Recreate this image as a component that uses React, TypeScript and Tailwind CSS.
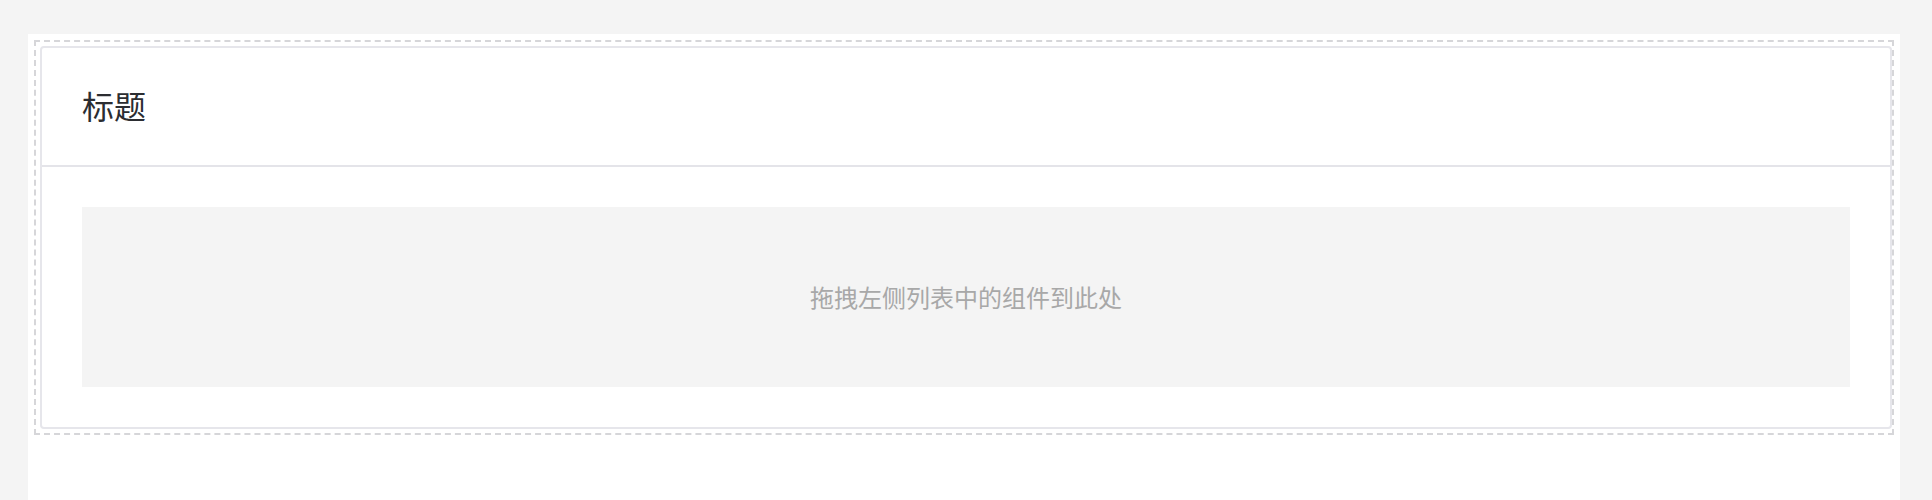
export default function App() {
  return (
    <div
      className="min-h-[500px] bg-[#f4f4f4] pt-[34px] pl-[28px] pr-[32px]"
      style={{ fontFamily: '"Noto Sans CJK SC", "Noto Sans", sans-serif' }}
    >
      <div className="min-h-[466px] bg-white p-[6px]">
        <div className="border-2 border-dashed border-[#d6d6d9] py-[4px] pl-[4px] pr-0">
          <div className="rounded-[4px] border-2 border-[#e6e6eb] bg-white">
            <div className="flex h-[119px] items-center border-b-2 border-[#e4e4e9] px-[40px] pb-[3px]">
              <span className="text-[32px] leading-none text-[#2b2d31]">标题</span>
            </div>
            <div className="p-[40px]">
              <div className="flex h-[180px] items-center justify-center bg-[#f4f4f4]">
                <span className="text-[24px] text-[#a8a8a8]">拖拽左侧列表中的组件到此处</span>
              </div>
            </div>
          </div>
        </div>
      </div>
    </div>
  );
}
